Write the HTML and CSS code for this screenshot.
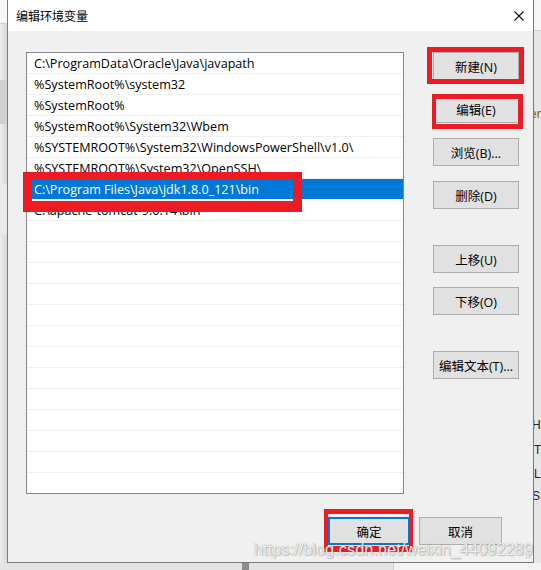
FILE: index.html
```html
<!DOCTYPE html>
<html>
<head>
<meta charset="utf-8">
<link rel="stylesheet" href="styles.css">
</head>
<body>
<div class="screen">
  <div class="bg-left">
    <div class="bl-top"></div>
    <div class="bl-band"></div>
    <div class="bl-mid"></div>
  </div>
  <div class="dialog">
    <div class="titlebar">
      <span class="title">编辑环境变量</span>
      <svg class="close" width="10" height="10" viewBox="0 0 10 10"><path d="M0.5 0.5 L9.5 9.5 M9.5 0.5 L0.5 9.5" stroke="#111" stroke-width="1.1" fill="none"/></svg>
    </div>
    <div class="body">
      <div class="main">
        <div class="list">
          <div class="row">C:\ProgramData\Oracle\Java\javapath</div>
          <div class="row">%SystemRoot%\system32</div>
          <div class="row">%SystemRoot%</div>
          <div class="row">%SystemRoot%\System32\Wbem</div>
          <div class="row">%SYSTEMROOT%\System32\WindowsPowerShell\v1.0\</div>
          <div class="row">%SYSTEMROOT%\System32\OpenSSH\</div>
          <div class="row selected">C:\Program Files\Java\jdk1.8.0_121\bin</div>
          <div class="row">C:\apache-tomcat-9.0.14\bin</div>
          <div class="row"></div><div class="row"></div><div class="row"></div><div class="row"></div>
          <div class="row"></div><div class="row"></div><div class="row"></div><div class="row"></div>
          <div class="row"></div><div class="row"></div><div class="row"></div><div class="row"></div>
          <div class="row"></div>
        </div>
        <div class="side">
          <button class="btn">新建(N)</button>
          <button class="btn g15">编辑(E)</button>
          <button class="btn g15">浏览(B)...</button>
          <button class="btn g15">删除(D)</button>
          <button class="btn g36">上移(U)</button>
          <button class="btn g14">下移(O)</button>
          <button class="btn g36">编辑文本(T)...</button>
        </div>
      </div>
      <div class="footer">
        <button class="btn ok">确定</button>
        <button class="btn cancel">取消</button>
      </div>
    </div>
    <div class="mark m1"></div>
    <div class="mark m2"></div>
    <div class="mark m3"></div>
    <div class="mark m4"></div>
    <div class="grip"></div>
  </div>
  <div class="bg-right">
    <div class="br-top"></div>
    <div class="br-frag f1">er</div>
    <div class="br-frag f2">HI</div>
    <div class="br-frag f3">T</div>
    <div class="br-frag f4">L</div>
    <div class="br-frag f5">SI</div>
  </div>
</div>
<div class="bg-bottom">
  <div class="bb-a"></div>
  <div class="bb-b"></div>
  <div class="bb-c"></div>
</div>
<div class="watermark">https://blog.csdn.net/weixin_44092289</div>
</body>
</html>
```
FILE: styles.css
```css
html, body {
  margin: 0;
  padding: 0;
}
body {
  width: 541px;
  height: 570px;
  overflow: hidden;
  background: #e3e3e3;
  position: relative;
  font-family: "Open Sans", "Noto Sans CJK SC", sans-serif;
  font-size: 12px;
  color: #000;
}
.screen {
  display: flex;
  height: 563px;
}
.bg-left {
  width: 7px;
  background: linear-gradient(to right, #ececec, #d8d8d8);
  display: flex;
  flex-direction: column;
}
.bl-top {
  height: 23px;
  background: #f7f7f7;
  border-bottom: 1px solid #cfcfcf;
}
.bl-band {
  margin-top: 56px;
  height: 44px;
  background: #d0d0d0;
}
.bl-mid {
  margin-top: 60px;
  height: 50px;
  background: #eaeaea;
}
.dialog {
  position: relative;
  width: 525px;
  height: 562px;
  border-left: 1px solid #7a7a7a;
  border-right: 1px solid #7a7a7a;
  border-bottom: 1px solid #7a7a7a;
  display: flex;
  flex-direction: column;
}
.titlebar {
  height: 31px;
  background: #fff;
  display: flex;
  align-items: center;
  justify-content: space-between;
  padding: 0 9px 0 8px;
}
.title {
  font-family: "Noto Sans CJK SC", sans-serif;
  font-size: 12px;
  line-height: 31px;
}
.close {
  display: block;
}
.body {
  flex: 1;
  background: #f0f0f0;
  padding-top: 21px;
  display: flex;
  flex-direction: column;
}
.main {
  display: flex;
  align-items: flex-start;
  padding-left: 18px;
}
.list {
  width: 376px;
  height: 440px;
  border: 1px solid #828790;
  background: #fff;
  overflow: hidden;
}
.row {
  height: 20px;
  line-height: 22px;
  font-size: 12.6px;
  border-bottom: 1px solid #f0f0f0;
  padding-left: 7px;
  white-space: nowrap;
}
.row.selected {
  background: #0078d7;
  color: #fff;
  border-bottom-color: #fff;
}
.side {
  margin-left: 29px;
  display: flex;
  flex-direction: column;
}
.btn {
  width: 86px;
  height: 28px;
  margin: 0;
  padding: 0;
  border: 1px solid #adadad;
  background: #e1e1e1;
  font-family: "Open Sans", "Noto Sans CJK SC", sans-serif;
  font-size: 12.5px;
  color: #000;
  text-align: center;
}
.g15 { margin-top: 15px; }
.g14 { margin-top: 14px; }
.g36 { margin-top: 36px; }
.footer {
  margin-top: 23px;
  display: flex;
  justify-content: flex-end;
  padding-right: 31px;
  gap: 9px;
}
.ok {
  width: 82px;
  border: 2px solid #0078d7;
}
.cancel {
  width: 83px;
}
.mark {
  position: absolute;
  border: 5px solid #ed1c24;
  box-sizing: border-box;
}
.m1 { left: 419px; top: 47px; width: 97px; height: 37px; }
.m2 { left: 424px; top: 94px; width: 91px; height: 35px; border-width: 5px 5px 5px 4px; }
.m3 { left: 15px; top: 172px; width: 279px; height: 40px; border-width: 8px 9px 11px 9px; }
.m4 { left: 316px; top: 509px; width: 89px; height: 43px; border-width: 5px 4px 6px 4px; }
.grip {
  position: absolute;
  right: 1px;
  bottom: 2px;
  width: 7px;
  height: 7px;
  background-image: radial-gradient(circle, #9a9a9a 0.8px, transparent 1px);
  background-size: 3px 3px;
}
.bg-right {
  flex: 1;
  background: #e6e6e6;
  position: relative;
  overflow: hidden;
}
.br-top {
  height: 30px;
  background: #f7f7f7;
  border-bottom: 1px solid #d0d0d0;
}
.br-frag {
  position: absolute;
  left: 0;
  font-family: "Liberation Sans", sans-serif;
  font-size: 12px;
  line-height: 14px;
  color: #222;
}
.f1 { top: 107px; left: -4px; color: #7a5a10; }
.f2 { top: 418px; left: -2px; }
.f3 { top: 443px; left: 0; }
.f4 { top: 467px; left: 0; }
.f5 { top: 489px; left: -2px; }
.bg-bottom {
  height: 7px;
  display: flex;
  background: #e3e3e3;
}
.bb-a { width: 242px; }
.bb-b { width: 7px; background: #8c8c8c; }
.bb-c { margin-left: 144px; flex: 1; background: #f3f3f3; border-left: 1px solid #cfcfcf; }
.watermark {
  position: absolute;
  left: 254px;
  top: 539px;
  font-family: "Liberation Sans", sans-serif;
  font-size: 16.4px;
  line-height: 20px;
  color: rgba(255, 255, 255, 0.85);
  text-shadow: 0 0 1px rgba(120,120,120,0.8), 1px 1px 1px rgba(0,0,0,0.2);
  white-space: nowrap;
}
```
